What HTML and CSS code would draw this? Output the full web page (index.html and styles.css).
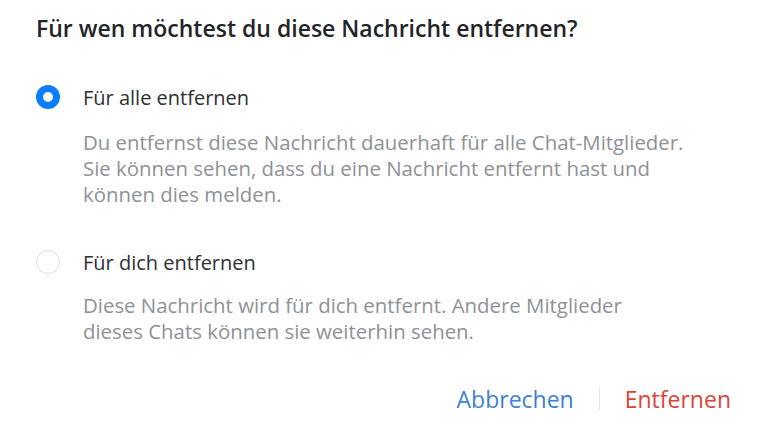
FILE: index.html
```html
<!DOCTYPE html>
<html lang="de">
<head>
<meta charset="utf-8">
<link rel="stylesheet" href="styles.css">
</head>
<body>
<div class="dialog">
  <h1 class="title">Für wen möchtest du diese Nachricht entfernen?</h1>
  <div class="option">
    <div class="option-row">
      <span class="radio radio-on"></span>
      <span class="label">Für alle entfernen</span>
    </div>
    <p class="desc">Du entfernst diese Nachricht dauerhaft für alle Chat-Mitglieder.<br>Sie können sehen, dass du eine Nachricht entfernt hast und<br>können dies melden.</p>
  </div>
  <div class="option option-2">
    <div class="option-row">
      <span class="radio"></span>
      <span class="label">Für dich entfernen</span>
    </div>
    <p class="desc">Diese Nachricht wird für dich entfernt. Andere Mitglieder<br>dieses Chats können sie weiterhin sehen.</p>
  </div>
  <div class="actions">
    <button class="btn btn-cancel">Abbrechen</button>
    <span class="divider"></span>
    <button class="btn btn-remove">Entfernen</button>
  </div>
</div>
</body>
</html>
```
FILE: styles.css
```css
html, body {
  margin: 0;
  padding: 0;
  background: #ffffff;
}
body {
  font-family: "Open Sans", "Noto Sans", sans-serif;
  width: 768px;
  height: 432px;
  overflow: hidden;
}
.dialog {
  padding: 13px 37px 0 36px;
  display: flex;
  flex-direction: column;
}
.title {
  margin: 0;
  font-size: 23px;
  font-weight: 600;
  color: #222428;
  line-height: 30px;
  letter-spacing: 0;
}
.option {
  margin-top: 41px;
  display: flex;
  flex-direction: column;
}
.option-2 {
  margin-top: 42px;
}
.option-row {
  display: flex;
  align-items: center;
  gap: 23px;
  height: 26px;
}
.radio {
  width: 24px;
  height: 24px;
  border-radius: 50%;
  box-sizing: border-box;
  border: 1.5px solid #d9dbde;
  background: #fff;
  flex: none;
}
.radio-on {
  border: 7.5px solid #0a7cff;
}
.label {
  font-size: 20px;
  color: #2e3033;
}
.desc {
  margin: 19px 0 0 47px;
  font-size: 20.4px;
  line-height: 26px;
  color: #8e9196;
}
.option-2 .desc {
  margin-top: 17px;
}
.actions {
  margin-top: 40px;
  display: flex;
  justify-content: flex-end;
  align-items: center;
  gap: 25px;
  height: 30px;
}
.btn {
  background: none;
  border: none;
  padding: 0;
  font-family: inherit;
  font-size: 23px;
  line-height: 30px;
  cursor: pointer;
}
.btn-cancel {
  color: #3f7fd6;
}
.btn-remove {
  color: #d8463c;
}
.divider {
  width: 1px;
  height: 24px;
  background: #e6e7e9;
}
```
